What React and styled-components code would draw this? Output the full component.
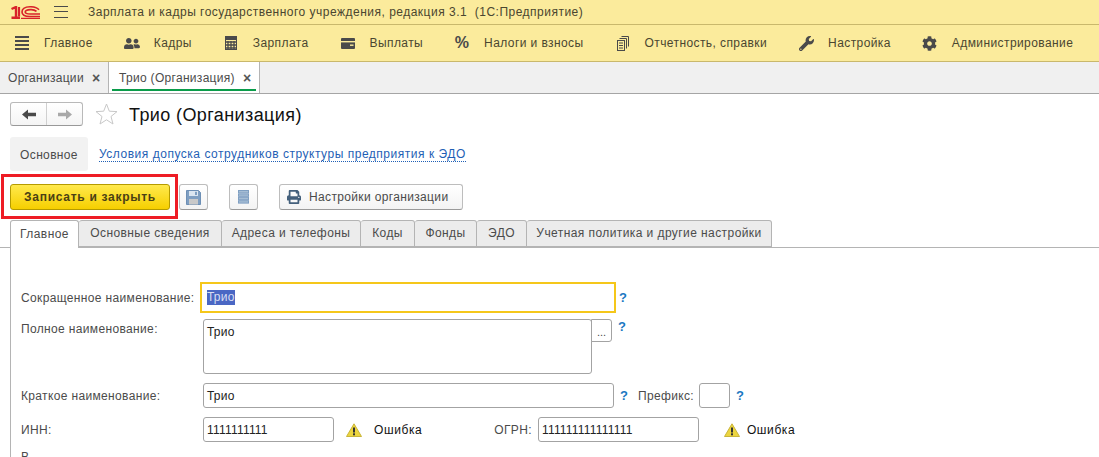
import React from "react";
import styled, { createGlobalStyle } from "styled-components";
import { FaUserFriends, FaWrench, FaCog, FaPrint } from "react-icons/fa";

const GlobalStyle = createGlobalStyle`
  html, body {
    margin: 0;
    height: 100%;
    overflow: hidden;
    background: #fff;
    font-family: "Liberation Sans", Arial, sans-serif;
    font-size: 12px;
    color: #4b4b4b;
  }
`;

const Page = styled.div`
  width: 1099px;
  height: 457px;
  overflow: hidden;
`;

const TitleBar = styled.div`
  display: flex;
  align-items: center;
  height: 24px;
  background: #fbeb9c;
  border-bottom: 1px solid #c9b86c;
  padding-left: 11px;
  font-size: 12px;
  letter-spacing: 0.49px;
  color: #4a4630;
  white-space: pre;
`;

const Burger = styled.div`
  width: 14px;
  height: 10px;
  margin: 0 20px 0 14px;
  border-top: 1px solid #4a4a4a;
  border-bottom: 1px solid #4a4a4a;
  position: relative;
  &::after {
    content: "";
    position: absolute;
    left: 0;
    right: 0;
    top: 4px;
    height: 1px;
    background: #4a4a4a;
  }
`;

const SectionBar = styled.nav`
  display: flex;
  align-items: center;
  height: 36px;
  background: #fbeb9c;
  border-bottom: 1px solid #c9b86c;
  padding-left: 14px;
  gap: 31px;
`;

const SectionItem = styled.div`
  display: flex;
  align-items: center;
  gap: 14px;
  color: #4a4630;
  letter-spacing: 0.41px;
  white-space: nowrap;
`;

const SectionIcon = styled.span`
  display: flex;
  align-items: center;
  justify-content: center;
  width: 16px;
  height: 18px;
  color: #4a4a4a;
  font-size: ${(p) => p.$size || 14}px;
  font-weight: ${(p) => (p.$bold ? 700 : 400)};
`;

const TabsBar = styled.div`
  display: flex;
  height: 31px;
  background: #f0f0f0;
  border-bottom: 1px solid #a5a5a5;
`;

const OpenTab = styled.div`
  display: flex;
  align-items: center;
  position: relative;
  height: 31px;
  padding: 0 8px 0 ${(p) => (p.$active ? 10 : 8)}px;
  gap: 8px;
  color: #4b4b4b;
  letter-spacing: 0.3px;
  border-right: 1px solid #b4b4b4;
  background: ${(p) => (p.$active ? "#fff" : "transparent")};
  ${(p) =>
    p.$active &&
    `&::after {
      content: "";
      position: absolute;
      left: 3px;
      right: 3px;
      bottom: 2px;
      height: 2px;
      background: #0a9c4a;
    }`}
`;

const Close = styled.span`
  font-size: 14px;
  font-weight: 700;
  color: #555;
  line-height: 1;
  letter-spacing: 0;
`;

const Head = styled.div`
  display: flex;
  align-items: center;
  height: 24px;
  margin: 8px 0 11px 10px;
`;

const NavGroup = styled.div`
  display: flex;
  width: 73px;
  height: 24px;
  box-sizing: border-box;
  border: 1px solid #b9b9b9;
  border-bottom-color: #999;
  border-radius: 3px;
  background: linear-gradient(#fff, #f4f4f4);
`;

const NavBtn = styled.div`
  flex: 1;
  display: flex;
  align-items: center;
  justify-content: center;
  color: ${(p) => (p.$off ? "#a9a9a9" : "#4a4a4a")};
  & + & {
    border-left: 1px solid #d0d0d0;
  }
`;

const StarSlot = styled.span`
  display: flex;
  margin: 0 11px 0 12px;
`;

const Title = styled.h1`
  margin: 0;
  padding-top: 2px;
  font-size: 18px;
  font-weight: 400;
  letter-spacing: 0.4px;
  color: #111;
`;

const SubNav = styled.div`
  display: flex;
  align-items: center;
  margin-left: 10px;
  height: 34px;
`;

const SubActive = styled.div`
  display: flex;
  align-items: center;
  justify-content: center;
  width: 78px;
  height: 34px;
  padding-top: 1px;
  box-sizing: border-box;
  background: #f2f2f2;
  border-radius: 3px;
  letter-spacing: 0.35px;
`;

const SubLink = styled.a`
  margin: 2px 0 0 11px;
  color: #1f5fb5;
  letter-spacing: 0.52px;
  border-bottom: 1px dotted #1f5fb5;
  line-height: 13px;
`;

const Toolbar = styled.div`
  display: flex;
  align-items: center;
  height: 26px;
  margin: 13px 0 10px 10px;
`;

const SaveWrap = styled.div`
  position: relative;
  margin-right: 9px;
`;

const RedFrame = styled.div`
  position: absolute;
  left: -9px;
  right: -8px;
  top: -10px;
  bottom: -9px;
  border: 3px solid #ee1c25;
  pointer-events: none;
`;

const PrimaryButton = styled.div`
  display: flex;
  align-items: center;
  justify-content: center;
  box-sizing: border-box;
  width: 160px;
  height: 26px;
  border: 1px solid #b59b00;
  border-radius: 3px;
  background: linear-gradient(#ffe94d, #f6cf00);
  color: #4a4015;
  font-weight: 700;
  font-size: 12px;
  letter-spacing: 0.72px;
`;

const ToolButton = styled.div`
  display: flex;
  align-items: center;
  justify-content: ${(p) => (p.$text ? "flex-start" : "center")};
  gap: 8px;
  box-sizing: border-box;
  width: ${(p) => p.$w}px;
  height: 26px;
  padding-left: ${(p) => (p.$text ? 7 : 0)}px;
  margin-right: ${(p) => p.$mr || 0}px;
  border: 1px solid #bdbdbd;
  border-bottom-color: #9a9a9a;
  border-radius: 3px;
  background: linear-gradient(#fff, #f3f3f3);
  color: #4b4b4b;
  letter-spacing: 0.35px;
  svg {
    display: block;
  }
`;

const FormTabs = styled.div`
  display: flex;
  height: 28px;
  box-sizing: border-box;
  padding-left: 10px;
  border-bottom: 1px solid #b4b4b4;
`;

const FormTab = styled.div`
  display: flex;
  align-items: center;
  justify-content: center;
  box-sizing: border-box;
  width: ${(p) => p.$w}px;
  height: ${(p) => (p.$active ? 28 : 27)}px;
  padding-bottom: 2px;
  border: 1px solid #b4b4b4;
  border-left: ${(p) => (p.$active ? "1px solid #b4b4b4" : "none")};
  border-bottom: ${(p) => (p.$active ? "none" : "1px solid #b4b4b4")};
  border-radius: 3px 3px 0 0;
  background: ${(p) => (p.$active ? "#fff" : "#ececec")};
  color: #4b4b4b;
  letter-spacing: 0.42px;
`;

const Panel = styled.div`
  margin-left: 10px;
  height: 209px;
  padding: 34px 0 0 10px;
  box-sizing: border-box;
  border-left: 1px solid #b4b4b4;
`;

const Row = styled.div`
  display: flex;
  align-items: ${(p) => (p.$top ? "flex-start" : "center")};
  height: ${(p) => p.$h}px;
  margin-bottom: ${(p) => p.$mb || 0}px;
`;

const Label = styled.div`
  width: ${(p) => p.$w || 182}px;
  flex: none;
  letter-spacing: 0.35px;
  white-space: nowrap;
  padding-top: ${(p) => p.$pt || 0}px;
`;

const InlineLabel = styled.div`
  margin: 0 ${(p) => p.$mr || 5}px 0 ${(p) => p.$ml}px;
  letter-spacing: 0.35px;
  white-space: nowrap;
`;

const Input = styled.div`
  display: flex;
  align-items: ${(p) => (p.$multi ? "flex-start" : "center")};
  box-sizing: border-box;
  flex: none;
  width: ${(p) => p.$w}px;
  height: ${(p) => p.$h || 25}px;
  padding: ${(p) => (p.$multi ? "5px 3px" : "0 3px")};
  border: 1px solid #a3a3a3;
  border-radius: 3px;
  background: #fff;
  color: #222;
  font-size: 12px;
  letter-spacing: 0.2px;
`;

const FocusInput = styled(Input)`
  border: 2px solid #f5c71a;
  border-radius: 0;
  padding: 0 5px;
`;

const Selected = styled.span`
  background: #4a67c4;
  color: #d8def2;
  line-height: 15px;
`;

const Ellipsis = styled.div`
  display: flex;
  align-items: center;
  justify-content: center;
  box-sizing: border-box;
  width: 21px;
  height: 23px;
  margin-left: -1px;
  border: 1px solid #a3a3a3;
  border-radius: 0 3px 3px 0;
  background: #fff;
  font-size: 11px;
  padding-top: 3px;
`;

const Help = styled.span`
  margin-left: ${(p) => p.$ml}px;
  padding-top: ${(p) => p.$pt || 0}px;
  font-weight: 700;
  font-size: 13px;
  line-height: 15px;
  color: #1b78c2;
`;

const Warn = styled.div`
  display: flex;
  align-items: center;
  margin-left: ${(p) => p.$ml}px;
  gap: ${(p) => p.$gap}px;
  color: #111;
  letter-spacing: 0.6px;
`;

const CutLabel = styled.div`
  letter-spacing: 0.2px;
  margin-top: 8px;
`;

const Logo = () => (
  <svg width="29" height="13" viewBox="0 0 29 13" fill="none" stroke="#d8232a">
    <path d="M0.5 3 L5 1 V11.5 M0.5 11.8 H9" strokeWidth="2.4" />
    <path d="M8 1 V10.5" strokeWidth="2.2" />
    <path d="M28 3.8 C26 1.5 22 0.7 19 0.8 C13.5 1 11 3.2 11 6 C11 9 14 10.5 19 10.5 H29" strokeWidth="1.6" />
    <path d="M25.5 5.4 C24 4 21.5 3.5 19.5 3.6 C16 3.8 14.2 4.7 14.2 6 C14.2 7.5 16.5 8 19.5 8 H29" strokeWidth="1.6" />
    <path d="M10 12.4 H29" strokeWidth="1.3" />
  </svg>
);

const LinesIcon = () => (
  <svg width="14" height="14" viewBox="0 0 14 14" fill="#4a4a4a">
    <rect y="0" width="14" height="2" />
    <rect y="4" width="14" height="2" />
    <rect y="8" width="14" height="2" />
    <rect y="12" width="14" height="2" />
  </svg>
);

const CalcIcon = () => (
  <svg width="12" height="14" viewBox="0 0 12 14">
    <rect x="0.5" y="0.5" width="11" height="13" fill="#fbeb9c" stroke="#4a4a4a" />
    <rect x="1" y="1" width="10" height="3" fill="#4a4a4a" />
    <path d="M3 5 V13 M6 5 V13 M9 5 V13 M1 6 H11 M1 9 H11 M1 12 H11" stroke="#4a4a4a" strokeWidth="1.3" />
  </svg>
);

const CardIcon = () => (
  <svg width="14" height="11" viewBox="0 0 14 11">
    <rect width="14" height="11" rx="1" fill="#4a4a4a" />
    <rect x="0" y="3" width="14" height="1.4" fill="#fbeb9c" />
    <rect x="9" y="6.5" width="3.5" height="1.4" fill="#fbeb9c" />
  </svg>
);

const DocsIcon = () => (
  <svg width="12" height="15" viewBox="0 0 12 15" fill="#fbeb9c" stroke="#4a4a4a">
    <path d="M4.5 0.5 H11.5 V10.5" />
    <path d="M2.5 2.5 H9.5 V12.5" />
    <rect x="0.5" y="4.5" width="7" height="10" />
    <path d="M2 7 H6 M2 9.5 H6 M2 12 H6" />
  </svg>
);

const DiskIcon = () => (
  <svg width="15" height="15" viewBox="0 0 15 15">
    <path d="M0.5 0.5 H12.5 L14.5 2.5 V14.5 H0.5 Z" fill="#7f9fc2" stroke="#6d8fb5" />
    <rect x="3" y="1" width="9" height="5" fill="#dbe6f1" />
    <rect x="9" y="1.8" width="2" height="3.2" fill="#7f9fc2" />
    <rect x="3" y="9" width="9" height="5.5" fill="#c9c9c9" />
  </svg>
);

const StackIcon = () => (
  <svg width="11" height="14" viewBox="0 0 11 14" fill="#a6bdd4" stroke="#7f9fc2">
    <rect x="0.5" y="0.5" width="10" height="2.4" />
    <rect x="0.5" y="3.9" width="10" height="2.4" />
    <rect x="0.5" y="7.3" width="10" height="2.4" />
    <rect x="0.5" y="10.7" width="10" height="2.4" />
  </svg>
);

const WarnIcon = () => (
  <svg width="16" height="14" viewBox="0 0 16 14">
    <path d="M8 0.8 L15.5 13.5 H0.5 Z" fill="#ecd53f" stroke="#c9b53a" strokeLinejoin="round" />
    <rect x="7" y="4.5" width="2" height="5" fill="#333" />
    <rect x="7" y="10.3" width="2" height="2" fill="#333" />
  </svg>
);

const ArrowIcon = ({ flip }) => (
  <svg width="14" height="11" viewBox="0 0 14 11" fill="currentColor" transform={flip ? "scale(-1 1)" : undefined}>
    <path d="M0 5.5 L6 0.5 V3.8 H14 V7.2 H6 V10.5 Z" />
  </svg>
);

const StarIcon = () => (
  <svg width="23" height="22" viewBox="0 0 23 22" fill="none" stroke="#c8c8c8">
    <path d="M11.5 1 L14.3 8.2 L22 8.6 L16 13.5 L18 21 L11.5 16.8 L5 21 L7 13.5 L1 8.6 L8.7 8.2 Z" strokeLinejoin="round" />
  </svg>
);

const sections = [
  { icon: <LinesIcon />, text: "Главное" },
  { icon: <FaUserFriends size={19} />, text: "Кадры" },
  { icon: <CalcIcon />, text: "Зарплата" },
  { icon: <CardIcon />, text: "Выплаты" },
  { icon: "%", text: "Налоги и взносы", bold: true, size: 16 },
  { icon: <DocsIcon />, text: "Отчетность, справки" },
  { icon: <FaWrench size={15} />, text: "Настройка" },
  { icon: <FaCog size={15} />, text: "Администрирование" },
];

const formTabs = [
  ["Главное", 69],
  ["Основные сведения", 143],
  ["Адреса и телефоны", 139],
  ["Коды", 54],
  ["Фонды", 62],
  ["ЭДО", 50],
  ["Учетная политика и другие настройки", 245],
];

export default function App() {
  return (
    <Page>
      <GlobalStyle />
      <TitleBar>
        <Logo />
        <Burger />
        Зарплата и кадры государственного учреждения, редакция 3.1  (1С:Предприятие)
      </TitleBar>
      <SectionBar>
        {sections.map((s) => (
          <SectionItem key={s.text}>
            <SectionIcon $bold={s.bold} $size={s.size}>{s.icon}</SectionIcon>
            {s.text}
          </SectionItem>
        ))}
      </SectionBar>
      <TabsBar>
        <OpenTab>
          Организации <Close>×</Close>
        </OpenTab>
        <OpenTab $active>
          Трио (Организация) <Close>×</Close>
        </OpenTab>
      </TabsBar>
      <Head>
        <NavGroup>
          <NavBtn><ArrowIcon /></NavBtn>
          <NavBtn $off><ArrowIcon flip /></NavBtn>
        </NavGroup>
        <StarSlot><StarIcon /></StarSlot>
        <Title>Трио (Организация)</Title>
      </Head>
      <SubNav>
        <SubActive>Основное</SubActive>
        <SubLink>Условия допуска сотрудников структуры предприятия к ЭДО</SubLink>
      </SubNav>
      <Toolbar>
        <SaveWrap>
          <PrimaryButton>Записать и закрыть</PrimaryButton>
          <RedFrame />
        </SaveWrap>
        <ToolButton $w={29} $mr={21}><DiskIcon /></ToolButton>
        <ToolButton $w={29} $mr={21}><StackIcon /></ToolButton>
        <ToolButton $w={184} $text><FaPrint size={14} color="#44607c" />Настройки организации</ToolButton>
      </Toolbar>
      <FormTabs>
        {formTabs.map(([text, w], i) => (
          <FormTab key={text} $w={w} $active={i === 0}>{text}</FormTab>
        ))}
      </FormTabs>
      <Panel>
        <Row $h={31} $mb={6}>
          <Label $w={179}>Сокращенное наименование:</Label>
          <FocusInput $w={416} $h={31}><Selected>Трио</Selected></FocusInput>
          <Help $ml={3}>?</Help>
        </Row>
        <Row $h={55} $mb={9} $top>
          <Label $pt={3}>Полное наименование:</Label>
          <Input $w={389} $h={55} $multi>Трио</Input>
          <Ellipsis>...</Ellipsis>
          <Help $ml={6}>?</Help>
        </Row>
        <Row $h={25} $mb={9}>
          <Label>Краткое наименование:</Label>
          <Input $w={411}>Трио</Input>
          <Help $ml={6}>?</Help>
          <InlineLabel $ml={10}>Префикс:</InlineLabel>
          <Input $w={31} />
          <Help $ml={6}>?</Help>
        </Row>
        <Row $h={25}>
          <Label>ИНН:</Label>
          <Input $w={131}>1111111111</Input>
          <Warn $ml={12} $gap={12}><WarnIcon />Ошибка</Warn>
          <InlineLabel $ml={72} $mr={6}>ОГРН:</InlineLabel>
          <Input $w={161}>111111111111111</Input>
          <Warn $ml={25} $gap={7}><WarnIcon />Ошибка</Warn>
        </Row>
        <CutLabel>В</CutLabel>
      </Panel>
    </Page>
  );
}
